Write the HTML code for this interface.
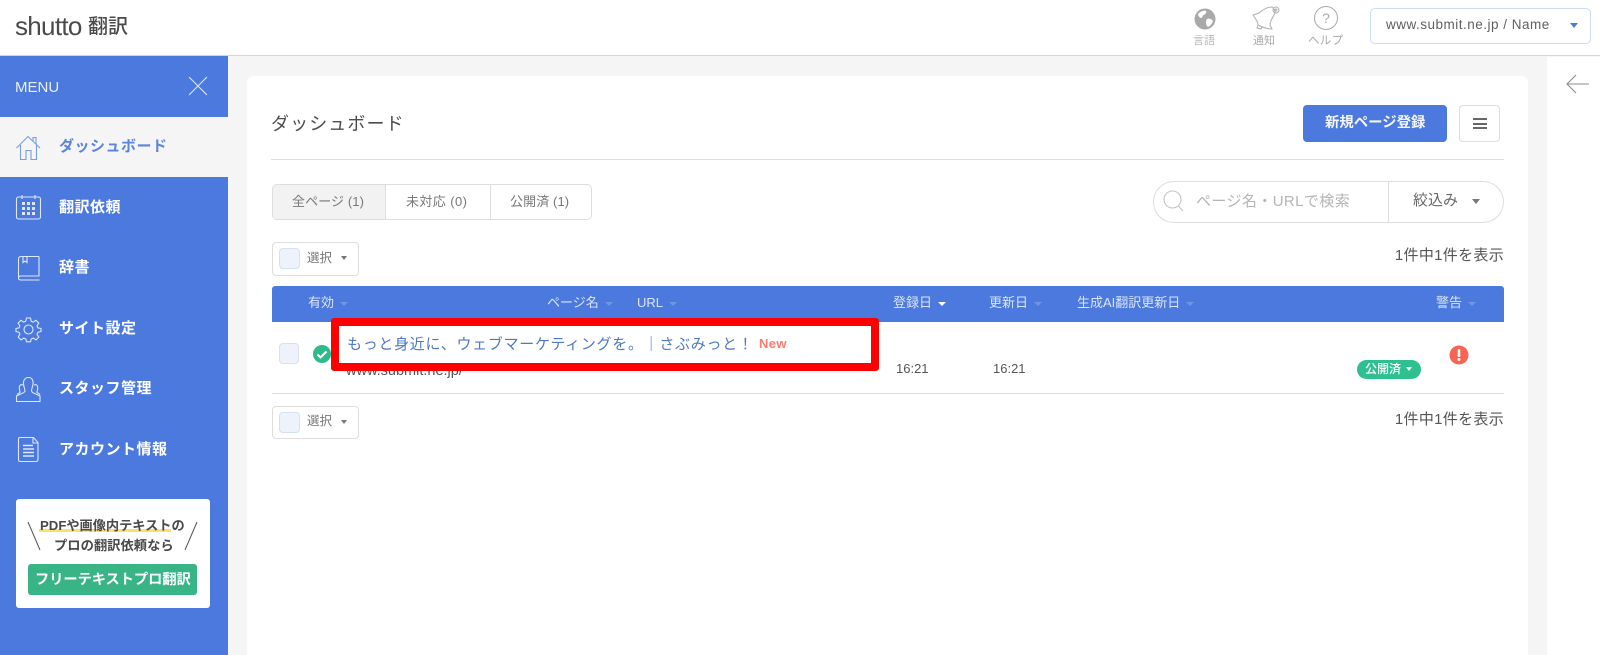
<!DOCTYPE html>
<html lang="ja"><head><meta charset="utf-8"><title>shutto翻訳</title>
<style>
html,body{margin:0;padding:0;width:1600px;height:655px;overflow:hidden;background:#f5f5f5}
body{font-family:"Liberation Sans","Noto Sans CJK JP",sans-serif;color:#555;position:relative;filter:blur(.35px)}
.a{position:absolute;white-space:nowrap}
.box{position:absolute;box-sizing:border-box}
.nav{position:absolute;left:59px;color:#fff;font-size:15px;font-weight:700;letter-spacing:.5px;line-height:20px;white-space:nowrap}
.th{position:absolute;top:294px;font-size:13px;line-height:18px;color:#dbe5f8;white-space:nowrap}
.th i{display:inline-block;width:0;height:0;border-left:4px solid transparent;border-right:4px solid transparent;border-top:4px solid #7396e4;margin-left:6px;vertical-align:middle}
.sel{position:absolute;left:272px;width:87px;height:33.5px;box-sizing:border-box;background:#fff;border:1px solid #ddd;border-radius:4px}
.cb{position:absolute;background:#eef3fb;border:1px solid #d6e0f0;border-radius:4px;box-sizing:border-box}
svg{position:absolute;overflow:visible}
</style></head><body>

<div class="box" style="left:0;top:0;width:1600px;height:56px;background:#fff;border-bottom:1.5px solid #d4d4d4"></div>
<div class="a" style="left:15px;top:7px;font-size:26px;letter-spacing:-.7px;line-height:38px;color:#4a4a4a">shutto</div>
<div class="a" style="left:88px;top:13px;font-size:20px;font-weight:500;line-height:28px;color:#4a4a4a">翻訳</div>

<svg style="left:1194px;top:8px" width="22" height="22" viewBox="0 0 22 22"><circle cx="11" cy="11" r="10.5" fill="#a9a9a9"/><path d="M4 6c3-3 6-4 8-3 1 2-1 3-2 4-2 0-1 3-3 3-1 0-3-2-3-4zm9 5c2-1 5 0 6 2-1 3-3 5-5 6-2-2-3-5-1-8z" fill="#fff"/></svg>
<div class="a" style="left:1193px;top:34px;font-size:11px;line-height:15px;color:#b8b8b8">言語</div>
<svg style="left:1253px;top:6px" width="26" height="24" viewBox="0 0 26 24" fill="none" stroke="#b0b0b0" stroke-width="1"><path d="M0 9C4 8 8 6 10 4 13 2 16 1 19 1c2 1 3 4 3 6-2 4-5 8-5 12l2 4C14 23 9 21 5 19 5 15 2 12 0 9z"/><path d="M5 19l-1 3 4 1 1-2"/><circle cx="23" cy="4" r="3"/><circle cx="23" cy="4" r="1"/></svg>
<div class="a" style="left:1253px;top:34px;font-size:11px;line-height:15px;color:#a9a9a9">通知</div>
<svg style="left:1314px;top:6px" width="24" height="24" viewBox="0 0 24 24"><circle cx="12" cy="12" r="11.5" fill="none" stroke="#a9a9a9"/><text x="12" y="17" text-anchor="middle" font-size="14" fill="#a9a9a9" font-family="Liberation Sans">?</text></svg>
<div class="a" style="left:1308px;top:34px;font-size:11.5px;letter-spacing:.3px;line-height:15px;color:#a9a9a9">ヘルプ</div>

<div class="box" style="left:1370px;top:8px;width:221px;height:36px;background:#fff;border:1px solid #c9dcf2;border-radius:5px"></div>
<div class="a" style="left:1386px;top:15px;font-size:13.5px;letter-spacing:.5px;line-height:20px;color:#5f5f5f">www.submit.ne.jp / Name</div>
<div class="box" style="left:1570px;top:23px;width:0;height:0;border-left:4px solid transparent;border-right:4px solid transparent;border-top:5px solid #4c7ade"></div>

<!-- sidebar -->
<div class="box" style="left:0;top:56px;width:228px;height:599px;background:#4b79de"></div>
<div class="box" style="left:0;top:117px;width:228px;height:60px;background:#f5f5f5"></div>
<div class="a" style="left:15px;top:78px;font-size:15px;line-height:20px;color:#e8effc">MENU</div>
<svg style="left:189px;top:77px" width="18" height="18" viewBox="0 0 18 18" stroke="#dfe8fa" stroke-width="1.1"><path d="M0 0l18 18M18 0L0 18"/></svg>

<svg style="left:16px;top:135px" width="25" height="26" viewBox="0 0 25 26" fill="none" stroke="#7b9de6" stroke-width="1.1"><path d="M.5 13L12 1.500l12 11.500"/><path d="M17 6V2.500h3V9"/><path d="M4.500 10v14.500h5.500v-9h5v9h5.500V10"/></svg>
<div class="nav" style="top:137px;color:#5a84e0">ダッシュボード</div>

<svg style="left:16px;top:195px" width="25" height="25" viewBox="0 0 25 25" fill="none" stroke="#dfe8fa" stroke-width="1.1"><rect x=".5" y="2" width="24" height="22" rx="2"/><path d="M6 0v4M19 0v4"/><g fill="#dfe8fa" stroke="none"><rect x="6" y="7" width="3" height="3"/><rect x="11" y="7" width="3" height="3"/><rect x="16" y="7" width="3" height="3"/><rect x="6" y="12" width="3" height="3"/><rect x="11" y="12" width="3" height="3"/><rect x="16" y="12" width="3" height="3"/><rect x="6" y="17" width="3" height="3"/><rect x="11" y="17" width="3" height="3"/><rect x="16" y="17" width="3" height="3"/></g></svg>
<div class="nav" style="top:198px">翻訳依頼</div>

<svg style="left:18px;top:256px" width="22" height="25" viewBox="0 0 22 25" fill="none" stroke="#dfe8fa" stroke-width="1.1"><path d="M21 .5H3Q.5.500.5 3v19Q.500 24 3 24h18.500M21 .500V20H3Q.500 20 .500 22"/><path d="M5 .500v6l2-1.500 2 1.500v-6"/></svg>
<div class="nav" style="top:258px">辞書</div>

<svg style="left:16px;top:317px" width="25" height="25" viewBox="0 0 25 25" fill="none" stroke="#dfe8fa" stroke-width="1.1"><circle cx="12.500" cy="12.500" r="4.500"/><path d="M10.500 1h4l.7 3.200 2 .9 2.800-1.800 2.800 2.800-1.800 2.800.9 2L25 11.500v3l-3.100.8-.9 2 1.800 2.800-2.800 2.800-2.800-1.800-2 .9-.7 2.800h-4l-.7-2.800-2-.9-2.800 1.800-2.800-2.800L3.900 17.300l-.9-2L0 14.500v-3l3-.6.900-2L2.100 6.100l2.800-2.800 2.800 1.800 2-.9z"/></svg>
<div class="nav" style="top:319px">サイト設定</div>

<svg style="left:16px;top:377px" width="25" height="25" viewBox="0 0 25 25" fill="none" stroke="#dfe8fa" stroke-width="1.1"><path d="M12.500 .5c3.500 0 5 3 4.500 6.500-.3 3-1.500 5-1.500 7l1 1.500 7.500 3.500v5.500H.5V19L8 15.500l1-1.500c0-2-1.200-4-1.500-7C7 3.500 9 .500 12.500 .5z"/><path d="M7 8C4 7 3 9 3.300 11.500c.2 1.500.7 2.500.7 4L1 17.500M18 8c3-1 4 1 3.700 3.500-.2 1.500-.7 2.500-.7 4l3 2"/></svg>
<div class="nav" style="top:379px">スタッフ管理</div>

<svg style="left:18px;top:437px" width="22" height="25" viewBox="0 0 22 25" fill="none" stroke="#dfe8fa" stroke-width="1.1"><path d="M2 .5h13.500l4.500 5V22.500Q20 24.500 18 24.500H2Q.5 24.500.5 22.500V2Q.5.500 2 .5z"/><path d="M15 .5V6h5"/><path d="M5 8.500h10M5 12h11M5 15.500h11M5 19h11" stroke-width="1.500"/></svg>
<div class="nav" style="top:440px">アカウント情報</div>

<div class="box" style="left:16px;top:499px;width:194px;height:109px;background:#fff;border-radius:3px"></div>
<div class="box" style="left:39px;top:529px;width:132px;height:3px;background:#fbe06a"></div>
<div class="a" style="left:40px;top:516px;font-size:13.2px;font-weight:700;line-height:20px;color:#4a4a4a">PDFや画像内テキストの</div>
<div class="a" style="left:54px;top:536px;font-size:13.3px;font-weight:700;line-height:20px;color:#4a4a4a">プロの翻訳依頼なら</div>
<svg style="left:27px;top:521px" width="171" height="30" viewBox="0 0 171 30" stroke="#555" stroke-width="1"><path d="M1 1l12 28M170 1l-12 28"/></svg>
<div class="box" style="left:28px;top:564px;width:169px;height:31px;background:#38b487;border-radius:3px"></div>
<div class="a" style="left:35px;top:570px;font-size:14.2px;font-weight:700;line-height:20px;color:#fff">フリーテキストプロ翻訳</div>

<!-- right strip -->
<div class="box" style="left:1547px;top:57px;width:53px;height:598px;background:#fff"></div>
<svg style="left:1566px;top:74px" width="23" height="20" viewBox="0 0 23 20" fill="none" stroke="#8d8d8d" stroke-width="1.1"><path d="M23 10H1M10 1l-9 9 9 9"/></svg>

<!-- card -->
<div class="box" style="left:247px;top:76px;width:1281px;height:579px;background:#fff;border-radius:6px 6px 0 0"></div>
<div class="a" style="left:271px;top:111px;font-size:18px;letter-spacing:1.1px;line-height:26px;color:#4d4d4d">ダッシュボード</div>
<div class="box" style="left:1303px;top:105px;width:144px;height:37px;background:#4b79de;border-radius:4px"></div>
<div class="a" style="left:1325px;top:113px;font-size:14.4px;font-weight:700;line-height:20px;color:#f2f5fd">新規ページ登録</div>
<div class="box" style="left:1459px;top:105px;width:41px;height:37px;background:#fff;border:1px solid #ddd;border-radius:4px"></div>
<div class="box" style="left:1473px;top:118px;width:14px;height:2px;background:#666"></div>
<div class="box" style="left:1473px;top:122.500px;width:14px;height:2px;background:#666"></div>
<div class="box" style="left:1473px;top:127px;width:14px;height:2px;background:#666"></div>
<div class="box" style="left:271px;top:159px;width:1233px;height:1px;background:#ddd"></div>

<div class="box" style="left:272px;top:184px;width:320px;height:36px;background:#fff;border:1px solid #ddd;border-radius:5px"></div>
<div class="box" style="left:273px;top:185px;width:113px;height:34px;background:#f2f2f2;border-right:1px solid #ddd;border-radius:4px 0 0 4px"></div>
<div class="box" style="left:490px;top:185px;width:1px;height:34px;background:#ddd"></div>
<div class="a" style="left:292px;top:192px;font-size:13px;letter-spacing:.1px;line-height:20px;color:#777">全ページ (1)</div>
<div class="a" style="left:406px;top:192px;font-size:13px;letter-spacing:.4px;line-height:20px;color:#777">未対応 (0)</div>
<div class="a" style="left:510px;top:192px;font-size:13px;letter-spacing:.1px;line-height:20px;color:#777">公開済 (1)</div>

<div class="box" style="left:1153px;top:181px;width:351px;height:42px;background:#fff;border:1px solid #ddd;border-radius:21px"></div>
<div class="box" style="left:1388px;top:182px;width:1px;height:40px;background:#ddd"></div>
<svg style="left:1163px;top:190px" width="21" height="24" viewBox="0 0 21 24" fill="none" stroke="#c4c4c4" stroke-width="1.100"><circle cx="9.500" cy="9.500" r="8.500"/><path d="M15.500 16l4.500 5"/></svg>
<div class="a" style="left:1196px;top:192px;font-size:15px;letter-spacing:.4px;line-height:20px;color:#b5b5b5">ページ名・URLで検索</div>
<div class="a" style="left:1413px;top:191px;font-size:15px;line-height:20px;color:#666">絞込み</div>
<div class="box" style="left:1472px;top:199px;width:0;height:0;border-left:4px solid transparent;border-right:4px solid transparent;border-top:5px solid #777"></div>

<div class="sel" style="top:242px"></div><div class="cb" style="left:279px;top:248px;width:21px;height:21px"></div>
<div class="a" style="left:307px;top:248px;font-size:12.500px;line-height:20px;color:#777">選択</div>
<div class="box" style="left:341px;top:256px;width:0;height:0;border-left:3.500px solid transparent;border-right:3.500px solid transparent;border-top:4px solid #777"></div>
<div class="a" style="right:96px;top:246px;font-size:15px;letter-spacing:.3px;line-height:20px;color:#555">1件中1件を表示</div>

<div class="box" style="left:272px;top:286px;width:1232px;height:36px;background:#4b79de;border-radius:3px 3px 0 0"></div>
<div class="th" style="left:308px">有効<i></i></div>
<div class="th" style="left:547px">ページ名<i></i></div>
<div class="th" style="left:637px">URL<i></i></div>
<div class="th" style="left:893px">登録日<i style="border-top-color:#fff"></i></div>
<div class="th" style="left:989px">更新日<i></i></div>
<div class="th" style="left:1077px">生成AI翻訳更新日<i></i></div>
<div class="th" style="left:1436px">警告<i></i></div>

<div class="cb" style="left:279px;top:343px;width:20px;height:21px"></div>
<svg style="left:313px;top:345px" width="18" height="18" viewBox="0 0 18 18"><circle cx="9" cy="9" r="9" fill="#2dbb8c"/><path d="M4.500 9.500l3 3 6-6" fill="none" stroke="#fff" stroke-width="2"/></svg>
<div class="a" style="left:346px;top:362px;font-size:14.5px;line-height:18px;color:#555">www.submit.ne.jp/</div>
<div class="a" style="left:896px;top:360px;font-size:13px;line-height:18px;color:#555">16:21</div>
<div class="a" style="left:993px;top:360px;font-size:13px;line-height:18px;color:#555">16:21</div>
<div class="box" style="left:1357px;top:360px;width:64px;height:19px;background:#2fc08f;border-radius:10px"></div>
<div class="a" style="left:1365px;top:360px;font-size:12px;font-weight:500;line-height:19px;color:#fff">公開済</div>
<div class="box" style="left:1406px;top:367px;width:0;height:0;border-left:3.500px solid transparent;border-right:3.500px solid transparent;border-top:4px solid #fff"></div>
<svg style="left:1449px;top:345px" width="20" height="20" viewBox="0 0 20 20"><circle cx="10" cy="10" r="9.500" fill="#f76552"/><rect x="8.700" y="4" width="2.600" height="8" rx="1" fill="#fff"/><circle cx="10" cy="14.500" r="1.500" fill="#fff"/></svg>

<!-- red box -->
<div class="box" style="left:331px;top:318px;width:548px;height:53px;background:#fff;border:8px solid #fe0000;border-radius:3px"></div>
<div class="a" style="left:347px;top:334px;font-size:15px;letter-spacing:.7px;line-height:22px;color:#4d79c4">もっと身近に、ウェブマーケティングを。｜さぶみっと！</div>
<div class="a" style="left:759px;top:335px;font-size:13px;letter-spacing:.4px;font-weight:700;line-height:18px;color:#ff7a6e">New</div>

<div class="box" style="left:272px;top:393px;width:1232px;height:1px;background:#ddd"></div>

<div class="sel" style="top:405.5px"></div><div class="cb" style="left:279px;top:412px;width:21px;height:21px"></div>
<div class="a" style="left:307px;top:411px;font-size:12.500px;line-height:20px;color:#777">選択</div>
<div class="box" style="left:341px;top:420px;width:0;height:0;border-left:3.500px solid transparent;border-right:3.500px solid transparent;border-top:4px solid #777"></div>
<div class="a" style="right:96px;top:410px;font-size:15px;letter-spacing:.3px;line-height:20px;color:#555">1件中1件を表示</div>
</body></html>
